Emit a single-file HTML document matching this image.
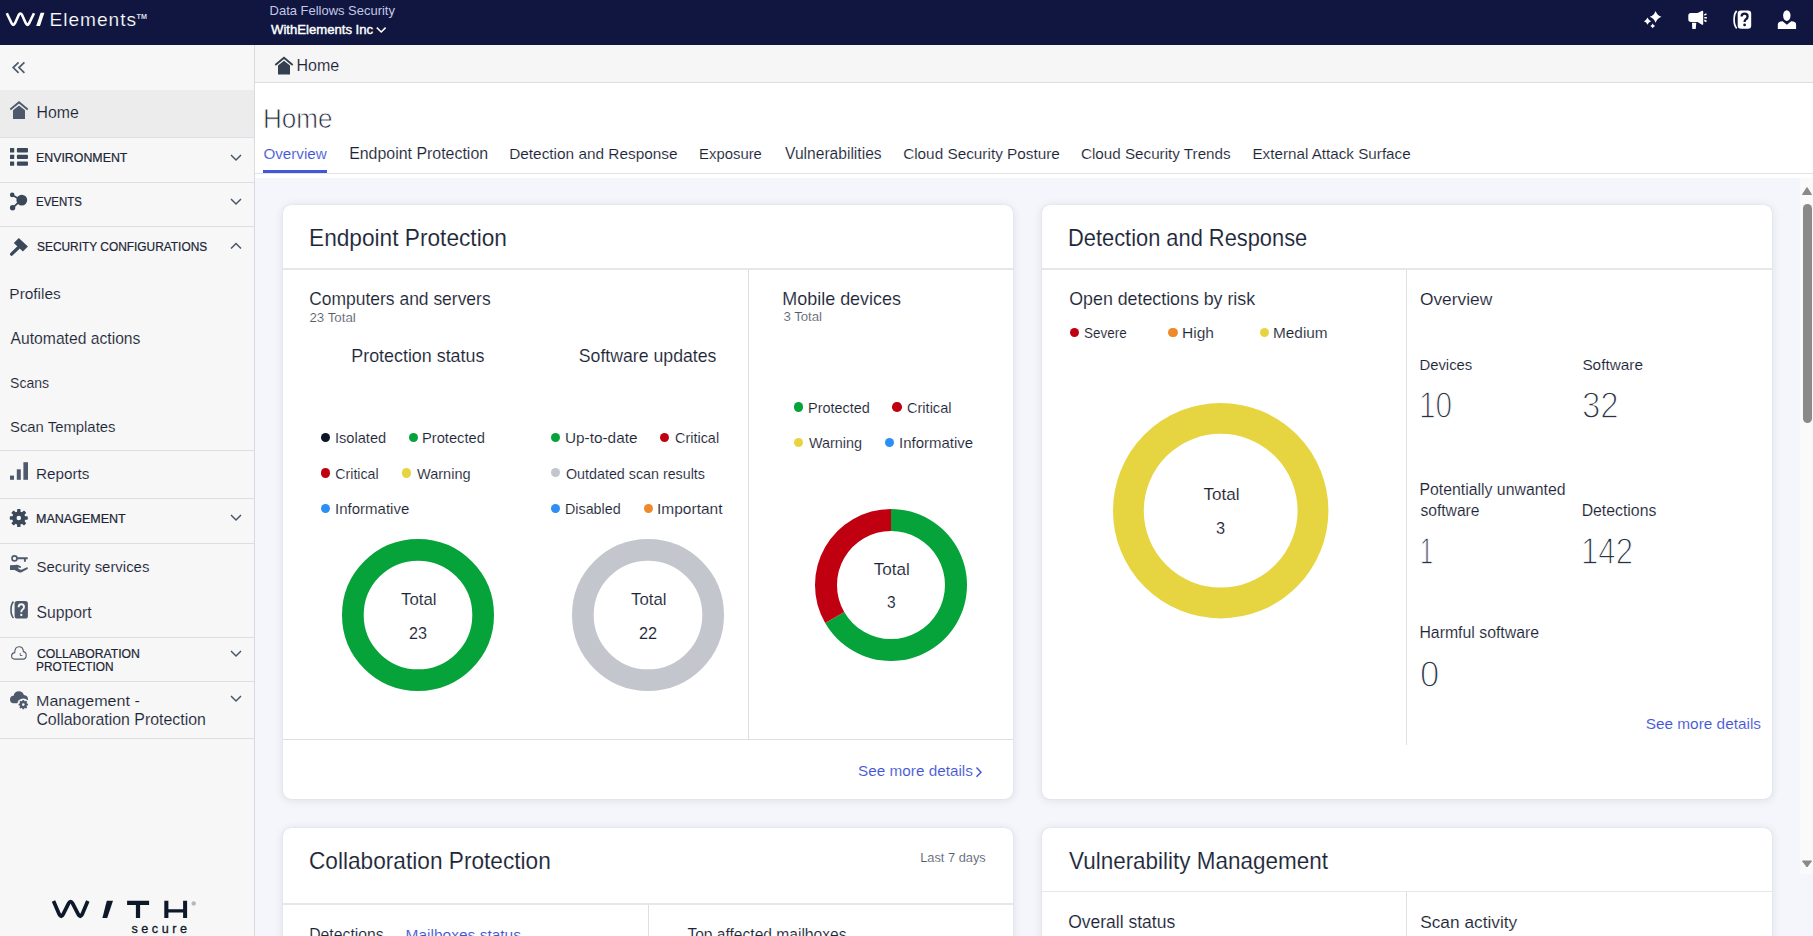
<!DOCTYPE html>
<html><head><meta charset="utf-8"><style>
html,body{margin:0;padding:0;width:1813px;height:936px;overflow:hidden;background:#f5f6fa}
body{position:relative;font-family:"Liberation Sans", sans-serif}
.abs{position:absolute}
.t{position:absolute;white-space:nowrap;line-height:1;transform-origin:0 0}
.dot{position:absolute;border-radius:50%}
.card{position:absolute;background:#fff;border-radius:8px;box-shadow:0 0 1px rgba(20,30,60,.20),0 1px 10px rgba(20,30,60,.11)}
</style></head><body>
<div class="abs" style="left:0;top:0;width:1813px;height:45px;background:#10163f"></div><div class="abs" style="left:0;top:45px;width:254px;height:891px;background:#f7f7f7"></div><div class="abs" style="left:254px;top:45px;width:1px;height:891px;background:#d9dbe0"></div><div class="abs" style="left:255px;top:45px;width:1558px;height:37px;background:#f6f6f6"></div><div class="abs" style="left:255px;top:82px;width:1558px;height:1px;background:#dcdde1"></div><div class="abs" style="left:255px;top:83px;width:1558px;height:90px;background:#ffffff"></div><div class="abs" style="left:255px;top:173px;width:1558px;height:1px;background:#e1e2e6"></div><div class="abs" style="left:255px;top:174px;width:1558px;height:4px;background:#ffffff"></div><div class="abs" style="left:255px;top:178px;width:1558px;height:758px;background:#f5f6fb"></div><div class="abs" style="left:263px;top:170px;width:64px;height:3px;background:#4356d6"></div><div class="abs" style="left:0;top:90px;width:254px;height:47px;background:#ececec"></div><div class="abs" style="left:0px;top:137px;width:254px;height:1px;background:#dcdee3"></div><div class="abs" style="left:0px;top:182px;width:254px;height:1px;background:#dcdee3"></div><div class="abs" style="left:0px;top:226px;width:254px;height:1px;background:#dcdee3"></div><div class="abs" style="left:0px;top:450px;width:254px;height:1px;background:#dcdee3"></div><div class="abs" style="left:0px;top:498px;width:254px;height:1px;background:#dcdee3"></div><div class="abs" style="left:0px;top:543px;width:254px;height:1px;background:#dcdee3"></div><div class="abs" style="left:0px;top:637px;width:254px;height:1px;background:#dcdee3"></div><div class="abs" style="left:0px;top:681px;width:254px;height:1px;background:#dcdee3"></div><div class="abs" style="left:0px;top:738px;width:254px;height:1px;background:#dcdee3"></div><svg class="abs" style="left:230px;top:153.5px" width="12" height="8" viewBox="0 0 12 8"><path d="M1 1 L6 6 L11 1" fill="none" stroke="#4b5667" stroke-width="1.5"/></svg><svg class="abs" style="left:230px;top:197.5px" width="12" height="8" viewBox="0 0 12 8"><path d="M1 1 L6 6 L11 1" fill="none" stroke="#4b5667" stroke-width="1.5"/></svg><svg class="abs" style="left:230px;top:650px" width="12" height="8" viewBox="0 0 12 8"><path d="M1 1 L6 6 L11 1" fill="none" stroke="#4b5667" stroke-width="1.5"/></svg><svg class="abs" style="left:230px;top:695px" width="12" height="8" viewBox="0 0 12 8"><path d="M1 1 L6 6 L11 1" fill="none" stroke="#4b5667" stroke-width="1.5"/></svg><svg class="abs" style="left:230px;top:242px" width="12" height="8" viewBox="0 0 12 8"><path d="M1 6.5 L6 1.5 L11 6.5" fill="none" stroke="#4b5667" stroke-width="1.5"/></svg><svg class="abs" style="left:230px;top:514px" width="12" height="8" viewBox="0 0 12 8"><path d="M1 1 L6 6 L11 1" fill="none" stroke="#4b5667" stroke-width="1.5"/></svg><div class="card" style="left:283px;top:205px;width:730px;height:594px"></div><div class="card" style="left:1042px;top:205px;width:730px;height:594px"></div><div class="card" style="left:283px;top:828px;width:730px;height:132px"></div><div class="card" style="left:1042px;top:828px;width:730px;height:132px"></div><div class="abs" style="left:283px;top:268px;width:730px;height:2px;background:#e6e7eb"></div><div class="abs" style="left:1042px;top:268px;width:730px;height:2px;background:#e6e7eb"></div><div class="abs" style="left:748px;top:270px;width:1px;height:469px;background:#dedfe3"></div><div class="abs" style="left:283px;top:739px;width:730px;height:1px;background:#dedfe3"></div><div class="abs" style="left:1406px;top:270px;width:1px;height:475px;background:#dedfe3"></div><div class="abs" style="left:283px;top:903px;width:730px;height:2px;background:#e6e7eb"></div><div class="abs" style="left:648px;top:905px;width:1px;height:31px;background:#dedfe3"></div><div class="abs" style="left:1042px;top:891px;width:730px;height:1px;background:#e6e7eb"></div><div class="abs" style="left:1406px;top:892px;width:1px;height:44px;background:#dedfe3"></div><svg class="abs" style="left:341.2px;top:538.4px" width="154" height="154" viewBox="-77 -77 154 154"><circle cx="0" cy="0" r="65.15" fill="none" stroke="#05a33a" stroke-width="21.700000000000003"/></svg><svg class="abs" style="left:571.2px;top:538.4px" width="154" height="154" viewBox="-77 -77 154 154"><circle cx="0" cy="0" r="65.15" fill="none" stroke="#c3c6cc" stroke-width="21.700000000000003"/></svg><svg class="abs" style="left:813.9px;top:508.1px" width="154" height="154" viewBox="-77 -77 154 154"><path d="M0.00 -76.00 A76 76 0 1 1 -65.82 38.00 L-46.77 27.00 A54 54 0 1 0 0.00 -54.00 Z" fill="#05a33a"/><path d="M-65.82 38.00 A76 76 0 0 1 -0.00 -76.00 L-0.00 -54.00 A54 54 0 0 0 -46.77 27.00 Z" fill="#c00011"/></svg><svg class="abs" style="left:1111.8px;top:401.8px" width="217.4" height="217.4" viewBox="-108.7 -108.7 217.4 217.4"><circle cx="0" cy="0" r="92.30000000000001" fill="none" stroke="#e6d540" stroke-width="30.799999999999997"/></svg><div class="dot" style="left:320.80px;top:432.70px;width:9.4px;height:9.4px;background:#0b1526"></div><div class="dot" style="left:408.50px;top:432.70px;width:9.4px;height:9.4px;background:#05a33a"></div><div class="dot" style="left:320.80px;top:468.20px;width:9.4px;height:9.4px;background:#c00011"></div><div class="dot" style="left:401.80px;top:468.20px;width:9.4px;height:9.4px;background:#e6d540"></div><div class="dot" style="left:320.80px;top:503.90px;width:9.4px;height:9.4px;background:#2b8ff6"></div><div class="dot" style="left:550.80px;top:432.50px;width:9.4px;height:9.4px;background:#05a33a"></div><div class="dot" style="left:660.00px;top:432.50px;width:9.4px;height:9.4px;background:#c00011"></div><div class="dot" style="left:550.80px;top:468.10px;width:9.4px;height:9.4px;background:#c3c6cc"></div><div class="dot" style="left:550.80px;top:503.70px;width:9.4px;height:9.4px;background:#2b8ff6"></div><div class="dot" style="left:643.50px;top:503.70px;width:9.4px;height:9.4px;background:#ee8a2b"></div><div class="dot" style="left:793.50px;top:402.30px;width:9.4px;height:9.4px;background:#05a33a"></div><div class="dot" style="left:892.20px;top:402.30px;width:9.4px;height:9.4px;background:#c00011"></div><div class="dot" style="left:793.50px;top:437.80px;width:9.4px;height:9.4px;background:#e6d540"></div><div class="dot" style="left:884.80px;top:437.80px;width:9.4px;height:9.4px;background:#2b8ff6"></div><div class="dot" style="left:1069.70px;top:327.70px;width:9.4px;height:9.4px;background:#c00011"></div><div class="dot" style="left:1168.40px;top:327.70px;width:9.4px;height:9.4px;background:#ee8a2b"></div><div class="dot" style="left:1259.80px;top:327.70px;width:9.4px;height:9.4px;background:#e6d540"></div><svg class="abs" style="left:975px;top:766px" width="8" height="12" viewBox="0 0 8 12"><path d="M1.5 1.5 L6 6.2 L1.5 10.8" fill="none" stroke="#4154d3" stroke-width="1.4"/></svg><div class="abs" style="left:1800px;top:178px;width:13px;height:696px;background:#fafafa"></div><svg class="abs" style="left:1801px;top:186px" width="12" height="10" viewBox="0 0 12 10"><path d="M1.5 8.5 L6 1.5 L10.5 8.5 Z" fill="#8a8a8a" stroke="#8a8a8a" stroke-linejoin="round" stroke-width="1"/></svg><svg class="abs" style="left:1801px;top:860px" width="12" height="8" viewBox="0 0 12 8"><path d="M1.5 1 L10.5 1 L6 7 Z" fill="#8a8a8a" stroke="#8a8a8a" stroke-linejoin="round" stroke-width="1"/></svg><div class="abs" style="left:1802.5px;top:204px;width:9.5px;height:219px;border-radius:5px;background:#8a8a8a"></div>
<svg class="abs" style="left:0;top:0" width="1813" height="936" viewBox="0 0 1813 936">
<path d="M6.8 13.2 L11.6 23.2 Q13.3 26.6 15.0 23.2 L18.6 15.2 Q20.4 11.8 22.2 15.2 L25.8 23.2 Q27.5 26.6 29.2 23.2 L34 13.2" fill="none" stroke="#fff" stroke-width="2.6" stroke-linejoin="round"/>
<path d="M40.6 12.8 L44.4 12.8 L40.0 26.1 L36.2 26.1 Z" fill="#fff"/>
<text x="136.5" y="19" font-family="Liberation Sans" font-size="7.2" font-weight="700" fill="#d8dbe8">TM</text>
<path d="M376.8 27.6 L381.2 32 L385.6 27.6" fill="none" stroke="#fff" stroke-width="1.5"/>
<path d="M1655.6 10.9 Q1657.134 15.266 1661.5 16.8 Q1657.134 18.334 1655.6 22.700000000000003 Q1654.0659999999998 18.334 1649.6999999999998 16.8 Q1654.0659999999998 15.266 1655.6 10.9 Z M1647.5 17.599999999999998 Q1648.436 20.264 1651.1 21.2 Q1648.436 22.136 1647.5 24.8 Q1646.564 22.136 1643.9 21.2 Q1646.564 20.264 1647.5 17.599999999999998 Z M1652.7 23.5 Q1653.324 25.276 1655.1000000000001 25.9 Q1653.324 26.523999999999997 1652.7 28.299999999999997 Q1652.076 26.523999999999997 1650.3 25.9 Q1652.076 25.276 1652.7 23.5 Z" fill="#fff"/>
<path d="M1690.9 13.1 L1697.6 13.1 L1701.6 10.9 Q1703.2 10.3 1703.2 11.8 L1703.2 23.9 Q1703.2 25.2 1701.6 24.6 L1697.6 21.9 L1690.9 21.9 Q1688.3 21.9 1688.3 19.3 L1688.3 15.7 Q1688.3 13.1 1690.9 13.1 Z" fill="#fff"/>
<path d="M1692 22.8 L1696.3 22.8 L1695.7 28.9 L1692.3 28.9 Z" fill="#fff"/>
<path d="M1704.3 15.1 L1706.5 13.9 M1704.3 17.7 L1706.9 17.7 M1704.3 20.3 L1706.5 21.5" stroke="#fff" stroke-width="1.6"/>
<rect x="1737.7" y="10.4" width="13.5" height="18.4" rx="3.2" fill="#fff"/>
<path d="M1736.7 11.0 Q1734.1 13.3 1734.1 19.6 Q1734.1 25.9 1736.7 28.3" fill="none" stroke="#fff" stroke-width="1.7"/>
<path d="M1741.6 16.6 Q1741.6 13.6 1744.6 13.6 Q1747.6 13.6 1747.6 16.4 Q1747.6 18.3 1745.7 19.4 Q1744.6 20.1 1744.6 22.0" fill="none" stroke="#10163f" stroke-width="2.3"/>
<circle cx="1744.6" cy="24.9" r="1.4" fill="#10163f"/>
<ellipse cx="1786.8" cy="15.6" rx="3.7" ry="5.3" fill="#fff"/>
<path d="M1777.8 28.9 L1777.8 24.6 Q1777.8 22.1 1780.6 21.5 L1782.6 21.2 L1786.9 24.8 L1791.2 21.2 L1793.2 21.5 Q1796.1 22.1 1796.1 24.6 L1796.1 28.9 Z" fill="#fff"/>
<path d="M18.6 62.4 L13.2 67.6 L18.6 72.8 M24.4 62.4 L19.0 67.6 L24.4 72.8" fill="none" stroke="#4e5a6b" stroke-width="1.7"/>
<g transform="translate(0 0)" fill="#4e5a6b"><path d="M10.3 109.6 L19 102.3 L27.7 109.6" fill="none" stroke="#4e5a6b" stroke-width="1.9"/><path d="M13 119 L13 110.2 L19 105.4 L25 110.2 L25 119 Z"/></g>
<g transform="translate(265 -44.6)" fill="#34404f"><path d="M10.3 109.6 L19 102.3 L27.7 109.6" fill="none" stroke="#34404f" stroke-width="1.9"/><path d="M13 119 L13 110.2 L19 105.4 L25 110.2 L25 119 Z"/></g>
<g fill="#3b4859"><rect x="10" y="148" width="4.2" height="4.4" rx="0.5"/><rect x="10" y="154.7" width="4.2" height="4.4" rx="0.5"/><rect x="10" y="161.4" width="4.2" height="4.4" rx="0.5"/><rect x="16.9" y="148" width="11.1" height="4.4" rx="1"/><rect x="16.9" y="154.7" width="11.1" height="4.4" rx="1"/><rect x="16.9" y="161.4" width="11.1" height="4.4" rx="1"/></g>
<g fill="#3b4859" stroke="#3b4859"><path d="M12.2 194.9 L21 200.1 L12.6 207.8" fill="none" stroke-width="1.8"/><circle cx="21.8" cy="200.1" r="5.4" stroke="none"/><circle cx="12.2" cy="194.9" r="2.3" stroke="none"/><circle cx="12.6" cy="207.8" r="2.7" stroke="none"/></g>
<g fill="#3b4859"><path d="M13.8 242.9 L18.8 237.9 L27.9 246.6 L22.9 251.5 Z"/><path d="M18.5 247.5 L11.6 254.2" stroke="#3b4859" stroke-width="3.2" stroke-linecap="round"/></g>
<g fill="#4e5a6b"><rect x="10" y="475.6" width="4" height="4.2"/><rect x="16.8" y="469.3" width="4" height="10.5"/><rect x="23.4" y="462.2" width="4.6" height="17.6"/></g>
<g fill="#3b4859"><circle cx="18.8" cy="518" r="6.6"/><rect x="17.1" y="509" width="3.4" height="9" rx="0.6" transform="rotate(0.0 18.8 518)"/><rect x="17.1" y="509" width="3.4" height="9" rx="0.6" transform="rotate(45.0 18.8 518)"/><rect x="17.1" y="509" width="3.4" height="9" rx="0.6" transform="rotate(90.0 18.8 518)"/><rect x="17.1" y="509" width="3.4" height="9" rx="0.6" transform="rotate(135.0 18.8 518)"/><rect x="17.1" y="509" width="3.4" height="9" rx="0.6" transform="rotate(180.0 18.8 518)"/><rect x="17.1" y="509" width="3.4" height="9" rx="0.6" transform="rotate(225.0 18.8 518)"/><rect x="17.1" y="509" width="3.4" height="9" rx="0.6" transform="rotate(270.0 18.8 518)"/><rect x="17.1" y="509" width="3.4" height="9" rx="0.6" transform="rotate(315.0 18.8 518)"/></g><circle cx="18.8" cy="518" r="2.3" fill="#f7f7f7"/>
<g fill="none" stroke="#4e5a6b"><circle cx="14.5" cy="558.4" r="2.5" stroke-width="1.6"/><path d="M17.0 558.3 L27.7 558.3 M24.9 558.3 L24.9 561.7" stroke-width="1.9"/></g>
<path d="M10 565.2 L15.2 565.0 Q16.5 564.3 18 565.0 L20.6 566.2 Q21.6 566.8 21.0 567.6 Q20.6 568.0 19.8 567.8 L17.6 567.6 L18.8 568.8 Q20.4 570.2 22.0 569.6 L26.4 567.4 Q27.6 566.9 27.9 568.1 Q28 568.8 27.2 569.3 L21.6 572.2 Q20.2 572.9 18.8 572.3 L14.6 569.9 L10 569.9 Z" fill="#4e5a6b"/>
<rect x="14.6" y="601" width="13.3" height="17.6" rx="2.6" fill="#4e5a6b"/>
<path d="M13.5 601.6 Q11.0 603.8 11.0 609.8 Q11.0 615.8 13.5 618.0" fill="none" stroke="#4e5a6b" stroke-width="1.6"/>
<path d="M18.6 607.2 Q18.6 604.3 21.3 604.3 Q24.0 604.3 24.0 606.9 Q24.0 608.7 22.3 609.7 Q21.3 610.3 21.3 612.2" fill="none" stroke="#f7f7f7" stroke-width="1.9"/><circle cx="21.3" cy="615" r="1.15" fill="#f7f7f7"/>
<path d="M14.6 659.1 Q11.4 659.1 11.6 655.6 Q11.9 652.7 14.7 652.6 Q14.9 646.7 19.0 646.7 Q23.2 646.7 23.4 651.6 Q26.4 652.2 26.2 655.6 Q26.0 659.1 23.0 659.1 Z" fill="none" stroke="#4e5a6b" stroke-width="1.1"/>
<path d="M20.2 653.0 L20.2 655.5 L22.4 655.5" fill="none" stroke="#4e5a6b" stroke-width="0.85"/>
<path d="M13.6 703.2 Q10 703.2 10 699.6 Q10 696.1 13.6 695.8 Q14.4 691.2 18.8 691.2 Q22.8 691.2 23.9 695.0 Q28 695.4 28 699.3 L28 700.5 L20 703.2 Z" fill="#4e5a6b"/>
<circle cx="23.3" cy="704.6" r="6.2" fill="#f7f7f7"/><g fill="#4e5a6b"><circle cx="23.3" cy="704.6" r="3.5"/><rect x="22.3" y="699.9" width="2.0" height="4.7" rx="0.6" transform="rotate(0.0 23.3 704.6)"/><rect x="22.3" y="699.9" width="2.0" height="4.7" rx="0.6" transform="rotate(45.0 23.3 704.6)"/><rect x="22.3" y="699.9" width="2.0" height="4.7" rx="0.6" transform="rotate(90.0 23.3 704.6)"/><rect x="22.3" y="699.9" width="2.0" height="4.7" rx="0.6" transform="rotate(135.0 23.3 704.6)"/><rect x="22.3" y="699.9" width="2.0" height="4.7" rx="0.6" transform="rotate(180.0 23.3 704.6)"/><rect x="22.3" y="699.9" width="2.0" height="4.7" rx="0.6" transform="rotate(225.0 23.3 704.6)"/><rect x="22.3" y="699.9" width="2.0" height="4.7" rx="0.6" transform="rotate(270.0 23.3 704.6)"/><rect x="22.3" y="699.9" width="2.0" height="4.7" rx="0.6" transform="rotate(315.0 23.3 704.6)"/></g><circle cx="23.3" cy="704.6" r="1.3" fill="#f7f7f7"/>
<path d="M53.5 901.1 L59.3 914.4 Q61.2 918.3 63.1 914.4 L68.6 903.4 Q70.6 899.6 72.6 903.4 L78.3 914.4 Q80.2 918.3 82.1 914.4 L87.8 901.1" fill="none" stroke="#0d1828" stroke-width="3.7" stroke-linejoin="round"/>
<path d="M106.8 900.8 L113.0 900.8 L107.2 917.9 L102.4 917.9 Z" fill="#0d1828"/>
<path d="M127.1 900.8 L149.1 900.8 L149.1 904.9 L140.1 904.9 L140.1 917.9 L135.9 917.9 L135.9 904.9 L127.1 904.9 Z" fill="#0d1828"/>
<path d="M164.3 900.8 L168.4 900.8 L168.4 909.3 L183.1 909.3 L183.1 900.8 L187.1 900.8 L187.1 917.9 L183.1 917.9 L183.1 912.6 L168.4 912.6 L168.4 917.9 L164.3 917.9 Z" fill="#0d1828"/>
<circle cx="193.7" cy="903.4" r="2.2" fill="#b4b8c0"/>
<text x="131.4" y="933.3" font-family="Liberation Sans" font-size="12.6" font-weight="400" fill="#0d1828" letter-spacing="3.55" stroke="#0d1828" stroke-width="0.3">secure</text>
</svg>
<div class="t" style="left:49.47px;top:10.01px;font-size:19.13px;color:#ffffff;letter-spacing:0.98px;-webkit-text-stroke:0.2px #10163f;">Elements</div>
<div class="t" style="left:269.56px;top:4.60px;font-size:12.97px;color:#c3c8e8;">Data Fellows Security</div>
<div class="t" style="left:270.60px;top:23.72px;font-size:12.61px;color:#ffffff;transform:scaleX(1.041);-webkit-text-stroke:0.4px #fff;">WithElements Inc</div>
<div class="t" style="left:36.53px;top:104.91px;font-size:15.83px;color:#1b2536;-webkit-text-stroke:0.12px #f7f7f7;">Home</div>
<div class="t" style="left:36.21px;top:151.40px;font-size:13.48px;color:#1b2536;transform:scaleX(0.918);-webkit-text-stroke:0.22px #1b2536;">ENVIRONMENT</div>
<div class="t" style="left:36.28px;top:195.22px;font-size:13.48px;color:#1b2536;transform:scaleX(0.850);-webkit-text-stroke:0.22px #1b2536;">EVENTS</div>
<div class="t" style="left:36.72px;top:240.01px;font-size:13.48px;color:#1b2536;transform:scaleX(0.884);-webkit-text-stroke:0.22px #1b2536;">SECURITY CONFIGURATIONS</div>
<div class="t" style="left:9.37px;top:286.00px;font-size:15.41px;color:#1b2536;-webkit-text-stroke:0.12px #f7f7f7;">Profiles</div>
<div class="t" style="left:10.60px;top:331.01px;font-size:15.68px;color:#1b2536;-webkit-text-stroke:0.12px #f7f7f7;">Automated actions</div>
<div class="t" style="left:10.04px;top:376.00px;font-size:14.06px;color:#1b2536;-webkit-text-stroke:0.12px #f7f7f7;">Scans</div>
<div class="t" style="left:10.01px;top:420.40px;font-size:14.86px;color:#1b2536;-webkit-text-stroke:0.12px #f7f7f7;">Scan Templates</div>
<div class="t" style="left:35.98px;top:466.10px;font-size:15.27px;color:#1b2536;-webkit-text-stroke:0.12px #f7f7f7;">Reports</div>
<div class="t" style="left:36.20px;top:512.22px;font-size:13.48px;color:#1b2536;transform:scaleX(0.930);-webkit-text-stroke:0.22px #1b2536;">MANAGEMENT</div>
<div class="t" style="left:36.60px;top:560.00px;font-size:14.93px;color:#1b2536;-webkit-text-stroke:0.12px #f7f7f7;">Security services</div>
<div class="t" style="left:36.57px;top:605.01px;font-size:15.73px;color:#1b2536;-webkit-text-stroke:0.12px #f7f7f7;">Support</div>
<div class="t" style="left:36.59px;top:648.10px;font-size:12.90px;color:#1b2536;transform:scaleX(0.947);-webkit-text-stroke:0.22px #1b2536;">COLLABORATION</div>
<div class="t" style="left:36.25px;top:661.00px;font-size:12.90px;color:#1b2536;transform:scaleX(0.918);-webkit-text-stroke:0.22px #1b2536;">PROTECTION</div>
<div class="t" style="left:35.91px;top:692.70px;font-size:15.36px;color:#1b2536;transform:scaleX(1.048);-webkit-text-stroke:0.12px #f7f7f7;">Management -</div>
<div class="t" style="left:36.41px;top:711.60px;font-size:15.88px;color:#1b2536;-webkit-text-stroke:0.12px #f7f7f7;">Collaboration Protection</div>
<div class="t" style="left:296.42px;top:57.01px;font-size:16.03px;color:#1b2536;-webkit-text-stroke:0.12px #f6f6f6;">Home</div>
<div class="t" style="left:262.81px;top:105.90px;font-size:26.96px;color:#1e2738;transform:scaleX(0.968);-webkit-text-stroke:0.75px #fff;">Home</div>
<div class="t" style="left:263.39px;top:145.51px;font-size:15.23px;color:#4154d3;-webkit-text-stroke:0.12px #ffffff;">Overview</div>
<div class="t" style="left:349.13px;top:145.51px;font-size:15.93px;color:#1b2536;-webkit-text-stroke:0.12px #ffffff;">Endpoint Protection</div>
<div class="t" style="left:509.17px;top:145.50px;font-size:15.38px;color:#1b2536;-webkit-text-stroke:0.12px #ffffff;">Detection and Response</div>
<div class="t" style="left:699.11px;top:146.50px;font-size:14.87px;color:#1b2536;-webkit-text-stroke:0.12px #ffffff;">Exposure</div>
<div class="t" style="left:785.10px;top:145.51px;font-size:15.60px;color:#1b2536;-webkit-text-stroke:0.12px #ffffff;">Vulnerabilities</div>
<div class="t" style="left:903.13px;top:145.51px;font-size:15.34px;color:#1b2536;-webkit-text-stroke:0.12px #ffffff;">Cloud Security Posture</div>
<div class="t" style="left:1080.94px;top:145.50px;font-size:15.23px;color:#1b2536;-webkit-text-stroke:0.12px #ffffff;">Cloud Security Trends</div>
<div class="t" style="left:1252.48px;top:145.50px;font-size:15.22px;color:#1b2536;-webkit-text-stroke:0.12px #ffffff;">External Attack Surface</div>
<div class="t" style="left:309.29px;top:226.81px;font-size:23.19px;color:#1b2536;transform:scaleX(0.978);-webkit-text-stroke:0.12px #ffffff;">Endpoint Protection</div>
<div class="t" style="left:309.23px;top:290.80px;font-size:17.47px;color:#1b2536;-webkit-text-stroke:0.12px #ffffff;">Computers and servers</div>
<div class="t" style="left:309.43px;top:310.71px;font-size:13.30px;color:#555d6b;-webkit-text-stroke:0.12px #ffffff;">23 Total</div>
<div class="t" style="left:351.27px;top:347.90px;font-size:17.89px;color:#1b2536;-webkit-text-stroke:0.12px #ffffff;">Protection status</div>
<div class="t" style="left:578.79px;top:347.72px;font-size:17.69px;color:#1b2536;-webkit-text-stroke:0.12px #ffffff;">Software updates</div>
<div class="t" style="left:782.37px;top:291.00px;font-size:17.93px;color:#1b2536;-webkit-text-stroke:0.12px #ffffff;">Mobile devices</div>
<div class="t" style="left:783.40px;top:310.30px;font-size:13.21px;color:#555d6b;-webkit-text-stroke:0.12px #ffffff;">3 Total</div>
<div class="t" style="left:334.68px;top:431.01px;font-size:14.20px;color:#1b2536;transform:scaleX(1.030);-webkit-text-stroke:0.12px #ffffff;">Isolated</div>
<div class="t" style="left:422.32px;top:431.01px;font-size:14.20px;color:#1b2536;transform:scaleX(1.035);-webkit-text-stroke:0.12px #ffffff;">Protected</div>
<div class="t" style="left:335.29px;top:466.71px;font-size:14.20px;color:#1b2536;-webkit-text-stroke:0.12px #ffffff;">Critical</div>
<div class="t" style="left:416.50px;top:466.71px;font-size:14.20px;color:#1b2536;transform:scaleX(1.024);-webkit-text-stroke:0.12px #ffffff;">Warning</div>
<div class="t" style="left:334.65px;top:501.71px;font-size:14.20px;color:#1b2536;transform:scaleX(1.059);-webkit-text-stroke:0.12px #ffffff;">Informative</div>
<div class="t" style="left:565.23px;top:431.01px;font-size:14.20px;color:#1b2536;transform:scaleX(1.081);-webkit-text-stroke:0.12px #ffffff;">Up-to-date</div>
<div class="t" style="left:674.68px;top:431.01px;font-size:14.20px;color:#1b2536;transform:scaleX(1.017);-webkit-text-stroke:0.12px #ffffff;">Critical</div>
<div class="t" style="left:565.73px;top:466.71px;font-size:14.20px;color:#1b2536;transform:scaleX(1.007);-webkit-text-stroke:0.12px #ffffff;">Outdated scan results</div>
<div class="t" style="left:565.16px;top:501.71px;font-size:14.20px;color:#1b2536;transform:scaleX(1.007);-webkit-text-stroke:0.12px #ffffff;">Disabled</div>
<div class="t" style="left:657.20px;top:501.71px;font-size:14.20px;color:#1b2536;transform:scaleX(1.093);-webkit-text-stroke:0.12px #ffffff;">Important</div>
<div class="t" style="left:807.84px;top:400.71px;font-size:14.20px;color:#1b2536;transform:scaleX(1.019);-webkit-text-stroke:0.12px #ffffff;">Protected</div>
<div class="t" style="left:906.77px;top:400.71px;font-size:14.20px;color:#1b2536;transform:scaleX(1.026);-webkit-text-stroke:0.12px #ffffff;">Critical</div>
<div class="t" style="left:809.00px;top:436.21px;font-size:14.20px;color:#1b2536;transform:scaleX(1.014);-webkit-text-stroke:0.12px #ffffff;">Warning</div>
<div class="t" style="left:898.65px;top:436.21px;font-size:14.20px;color:#1b2536;transform:scaleX(1.056);-webkit-text-stroke:0.12px #ffffff;">Informative</div>
<div class="t" style="left:400.86px;top:590.51px;font-size:17.10px;color:#1b2536;transform:scaleX(0.982);-webkit-text-stroke:0.12px #ffffff;">Total</div>
<div class="t" style="left:409.19px;top:625.01px;font-size:17.10px;color:#1b2536;transform:scaleX(0.946);-webkit-text-stroke:0.12px #ffffff;">23</div>
<div class="t" style="left:630.86px;top:590.51px;font-size:17.10px;color:#1b2536;transform:scaleX(0.982);-webkit-text-stroke:0.12px #ffffff;">Total</div>
<div class="t" style="left:639.18px;top:625.01px;font-size:17.10px;color:#1b2536;transform:scaleX(0.955);-webkit-text-stroke:0.12px #ffffff;">22</div>
<div class="t" style="left:873.66px;top:560.80px;font-size:17.10px;color:#1b2536;-webkit-text-stroke:0.12px #ffffff;">Total</div>
<div class="t" style="left:886.53px;top:593.51px;font-size:17.10px;color:#1b2536;transform:scaleX(0.907);-webkit-text-stroke:0.12px #ffffff;">3</div>
<div class="t" style="left:858.09px;top:762.90px;font-size:15.31px;color:#4154d3;-webkit-text-stroke:0.12px #ffffff;">See more details</div>
<div class="t" style="left:1068.25px;top:226.90px;font-size:23.19px;color:#1b2536;transform:scaleX(0.942);-webkit-text-stroke:0.12px #ffffff;">Detection and Response</div>
<div class="t" style="left:1069.29px;top:291.00px;font-size:17.79px;color:#1b2536;-webkit-text-stroke:0.12px #ffffff;">Open detections by risk</div>
<div class="t" style="left:1084.16px;top:326.10px;font-size:14.20px;color:#1b2536;transform:scaleX(0.949);-webkit-text-stroke:0.12px #ffffff;">Severe</div>
<div class="t" style="left:1182.25px;top:326.10px;font-size:14.20px;color:#1b2536;transform:scaleX(1.096);-webkit-text-stroke:0.12px #ffffff;">High</div>
<div class="t" style="left:1273.47px;top:326.10px;font-size:14.20px;color:#1b2536;transform:scaleX(1.083);-webkit-text-stroke:0.12px #ffffff;">Medium</div>
<div class="t" style="left:1203.46px;top:485.71px;font-size:17.10px;color:#1b2536;-webkit-text-stroke:0.12px #ffffff;">Total</div>
<div class="t" style="left:1216.01px;top:519.60px;font-size:17.10px;color:#1b2536;transform:scaleX(0.955);-webkit-text-stroke:0.12px #ffffff;">3</div>
<div class="t" style="left:1419.91px;top:290.80px;font-size:17.36px;color:#1b2536;-webkit-text-stroke:0.12px #ffffff;">Overview</div>
<div class="t" style="left:1419.41px;top:357.70px;font-size:14.88px;color:#1b2536;-webkit-text-stroke:0.12px #ffffff;">Devices</div>
<div class="t" style="left:1582.39px;top:356.70px;font-size:15.37px;color:#1b2536;-webkit-text-stroke:0.12px #ffffff;">Software</div>
<div class="t" style="left:1418.51px;top:386.61px;font-size:37.10px;color:#2a3242;transform:scaleX(0.804);-webkit-text-stroke:1.3px #fff;">10</div>
<div class="t" style="left:1582.01px;top:386.61px;font-size:37.10px;color:#2a3242;transform:scaleX(0.890);-webkit-text-stroke:1.3px #fff;">32</div>
<div class="t" style="left:1419.43px;top:481.50px;font-size:15.84px;color:#1b2536;-webkit-text-stroke:0.12px #ffffff;">Potentially unwanted</div>
<div class="t" style="left:1420.39px;top:503.40px;font-size:15.66px;color:#1b2536;-webkit-text-stroke:0.12px #ffffff;">software</div>
<div class="t" style="left:1581.63px;top:503.41px;font-size:15.82px;color:#1b2536;-webkit-text-stroke:0.12px #ffffff;">Detections</div>
<div class="t" style="left:1420.35px;top:533.31px;font-size:37.68px;color:#2a3242;transform:scaleX(0.627);-webkit-text-stroke:1.3px #fff;">1</div>
<div class="t" style="left:1580.82px;top:533.31px;font-size:37.68px;color:#2a3242;transform:scaleX(0.827);-webkit-text-stroke:1.3px #fff;">142</div>
<div class="t" style="left:1419.43px;top:625.20px;font-size:15.84px;color:#1b2536;-webkit-text-stroke:0.12px #ffffff;">Harmful software</div>
<div class="t" style="left:1419.96px;top:656.90px;font-size:36.81px;color:#2a3242;transform:scaleX(0.942);-webkit-text-stroke:1.3px #fff;">0</div>
<div class="t" style="left:1645.68px;top:716.11px;font-size:15.38px;color:#4154d3;-webkit-text-stroke:0.12px #ffffff;">See more details</div>
<div class="t" style="left:309.37px;top:850.01px;font-size:23.19px;color:#1b2536;transform:scaleX(0.977);-webkit-text-stroke:0.12px #ffffff;">Collaboration Protection</div>
<div class="t" style="left:920.17px;top:852.31px;font-size:12.83px;color:#555d6b;-webkit-text-stroke:0.12px #ffffff;">Last 7 days</div>
<div class="t" style="left:309.24px;top:927.01px;font-size:15.75px;color:#1b2536;-webkit-text-stroke:0.12px #ffffff;">Detections</div>
<div class="t" style="left:405.56px;top:927.01px;font-size:15.50px;color:#4154d3;-webkit-text-stroke:0.12px #ffffff;">Mailboxes status</div>
<div class="t" style="left:687.39px;top:927.01px;font-size:15.58px;color:#1b2536;-webkit-text-stroke:0.12px #ffffff;">Top affected mailboxes</div>
<div class="t" style="left:1069.00px;top:850.01px;font-size:23.19px;color:#1b2536;transform:scaleX(0.969);-webkit-text-stroke:0.12px #ffffff;">Vulnerability Management</div>
<div class="t" style="left:1068.20px;top:914.21px;font-size:17.51px;color:#1b2536;-webkit-text-stroke:0.12px #ffffff;">Overall status</div>
<div class="t" style="left:1420.21px;top:914.20px;font-size:17.30px;color:#1b2536;-webkit-text-stroke:0.12px #ffffff;">Scan activity</div>
</body></html>
